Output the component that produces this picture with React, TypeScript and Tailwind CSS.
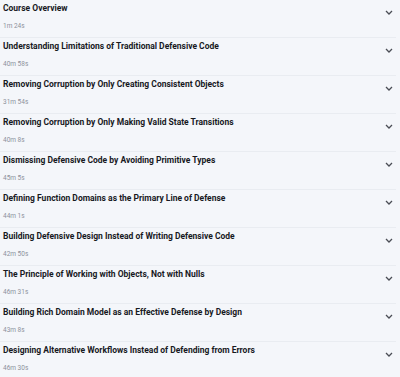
import React from "react";

const items: [string, string][] = [
  ["Course Overview", "1m 24s"],
  ["Understanding Limitations of Traditional Defensive Code", "40m 58s"],
  ["Removing Corruption by Only Creating Consistent Objects", "31m 54s"],
  ["Removing Corruption by Only Making Valid State Transitions", "40m 8s"],
  ["Dismissing Defensive Code by Avoiding Primitive Types", "45m 5s"],
  ["Defining Function Domains as the Primary Line of Defense", "44m 1s"],
  ["Building Defensive Design Instead of Writing Defensive Code", "42m 50s"],
  ["The Principle of Working with Objects, Not with Nulls", "46m 31s"],
  ["Building Rich Domain Model as an Effective Defense by Design", "43m 8s"],
  ["Designing Alternative Workflows Instead of Defending from Errors", "46m 30s"],
];

function Chevron() {
  return (
    <svg width="8" height="5" viewBox="0 0 8 5" fill="none" className="shrink-0">
      <path d="M1 1l3 3 3-3" stroke="#4a4d55" strokeWidth="1.3" />
    </svg>
  );
}

export default function App() {
  return (
    <div className="w-[400px] h-[377px] bg-[#f4f6fa] overflow-hidden font-['Roboto',sans-serif]">
      {items.map(([t, d], i) => (
        <div
          key={i}
          className="h-[38px] w-[396px] border-b border-[#e9ecf1] flex items-start justify-between pl-[3px]"
        >
          <div className="flex flex-col">
            <div className="text-[8.5px] leading-[12px] font-bold text-[#17191e] mt-[2px]">{t}</div>
            <div className="text-[6.5px] leading-[8px] text-[#8c919b] mt-[8px]">{d}</div>
          </div>
          <div className="mt-[10px] mr-[3px]">
            <Chevron />
          </div>
        </div>
      ))}
    </div>
  );
}
